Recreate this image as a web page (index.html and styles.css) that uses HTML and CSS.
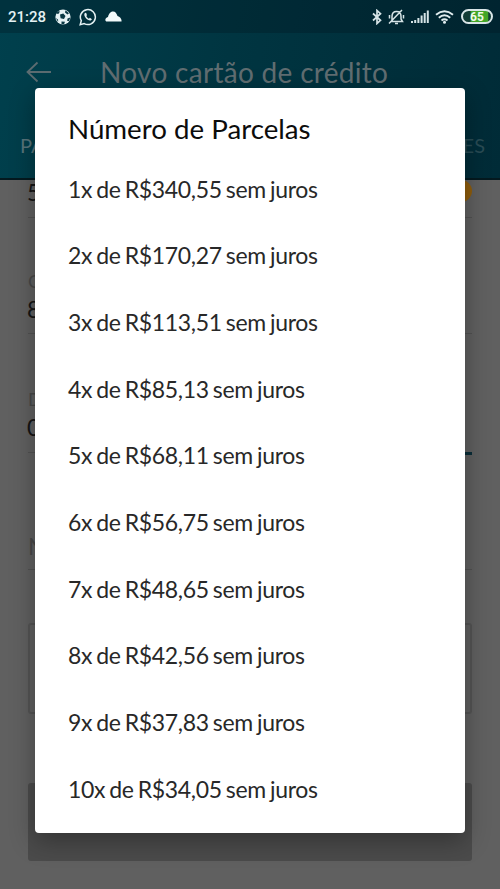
FILE: index.html
```html
<!DOCTYPE html>
<html lang="pt-BR">
<head>
<meta charset="utf-8">
<title>Novo cartão de crédito</title>
<link rel="stylesheet" href="styles.css">
</head>
<body>
<div class="screen">
  <header class="header">
    <div class="status">
      <span class="clock">21:28</span>
      <svg class="ball" width="16" height="16" viewBox="0 0 16 16"><circle cx="8" cy="8" r="7.6" fill="#e4f1f3"/><path d="M5 5.5 8.300 4.500 10.500 7 9 10 5.600 9.300ZM1 4.500 3 2.300 5 2.500 3.300 5ZM10.500 1.200 14 4.200 12.500 5.500 10 3.500ZM.8 9 3 10.500 3.200 13ZM6.500 12.500 10 12.800 9 15.200 6.500 15ZM12.500 9.500 15.300 8.500 14 12 12.200 12Z" fill="#083743"/></svg>
      <svg class="whats" width="18" height="18" viewBox="0 0 18 18"><path d="M1.200 16.700 2.300 12.700A7.500 7.500 0 1 1 5.200 15.600Z" fill="none" stroke="#e4f1f3" stroke-width="1.500"/><path d="M6.400 4.800 5.500 5.600C4.300 8.300 8.500 13 11.700 12.500L13 11.200 10.900 9.800 9.900 10.700C8.700 10.200 7.700 9.200 7.300 8.100L8 7.200 7.200 5Z" fill="#e4f1f3"/></svg>
      <svg class="cloud" width="17" height="11" viewBox="0 0 17 11"><path d="M2 10.500C-.5 10.500-.2 7 3 6 4 2 6 .5 8 .5 10.500.5 11.500 2.500 12.500 5 15 5.500 17 8.500 16.500 10.500Z" fill="#f2fafa"/></svg>
      <svg class="bluetooth" width="10" height="16" viewBox="0 0 10 16"><path d="M1 4.500 8.500 11.300 5 14.500V1.500L8.500 4.700 1 11.500" fill="none" stroke="#d5e3e6" stroke-width="1.700"/></svg>
      <svg class="mute" width="17" height="16" viewBox="0 0 17 16"><path d="M4 12V7.500C4 3.800 6 2.500 8.500 2.500S13 4 13 7.500V10L14.500 12.500H3M7 14.500H10M1 14.500 14 1M1.500 6V9.500M15.500 6V9.500" fill="none" stroke="#d5e3e6" stroke-width="1.500"/></svg>
      <svg class="signal" width="18" height="14" viewBox="0 0 18 14"><path d="M0 11H2V13H0ZM3.200 10H5.200V13H3.200ZM6.400 8H8.400V13H6.400ZM9.600 5.500H11.600V13H9.600ZM12.700 3H14.700V13H12.700ZM15.800.5H17.800V13H15.800Z" fill="#d5e3e6"/></svg>
      <svg class="wifi" width="19" height="14" viewBox="0 0 19 14"><path d="M1 4.700Q9.500-2.200 18 4.700M3.800 7.700Q9.500 2.800 15.200 7.700M6.500 10.400Q9.500 8 12.500 10.400" fill="none" stroke="#e0edef" stroke-width="1.900"/><circle cx="9.500" cy="12.300" r="1.500" fill="#e0edef"/></svg>
      <span class="battery">65</span>
    </div>
    <div class="bar">
      <svg width="26" height="22" viewBox="0 0 26 22"><path d="M25 11H1.500M11.500 1.500 1.500 11 11.500 20.500" fill="none" stroke="#5c6c71" stroke-width="1.800"/></svg>
      <h1 class="heading">Novo cartão de crédito</h1>
    </div>
    <nav class="tabs"><span>PA</span><span class="tab-off">ES</span></nav>
  </header>
  <main class="form">
    <div class="field first"><div class="value">5</div><i class="badge"></i></div>
    <div class="field second"><div class="label">C</div><div class="value">8</div></div>
    <div class="field third"><div class="label">D</div><div class="value">0</div><i class="focus"></i></div>
    <div class="field fourth"><div class="hint">N</div></div>
    <div class="box"></div>
    <div class="button"></div>
  </main>
  <section class="dialog" role="dialog">
    <h2 class="title">Número de Parcelas</h2>
    <ul class="options">
      <li><span class="option">1x de R$340,55 sem juros</span></li>
      <li><span class="option">2x de R$170,27 sem juros</span></li>
      <li><span class="option">3x de R$113,51 sem juros</span></li>
      <li><span class="option">4x de R$85,13 sem juros</span></li>
      <li><span class="option">5x de R$68,11 sem juros</span></li>
      <li><span class="option">6x de R$56,75 sem juros</span></li>
      <li><span class="option">7x de R$48,65 sem juros</span></li>
      <li><span class="option">8x de R$42,56 sem juros</span></li>
      <li><span class="option">9x de R$37,83 sem juros</span></li>
      <li><span class="option">10x de R$34,05 sem juros</span></li>
    </ul>
  </section>
</div>
</body>
</html>
```
FILE: styles.css
```css
* { box-sizing: border-box; }
body { margin: 0; font-family: Lato, sans-serif; }
.screen { position: relative; width: 500px; height: 889px; overflow: hidden; background: #606060; }
.header { height: 180px; background: linear-gradient(100deg, #00404d, #003541 45%, #002b37); border-bottom: 2px solid #04191f; }
.status { display: flex; align-items: center; height: 33px; padding: 0 8px; background: rgba(0, 20, 30, .3); }
.status svg { flex: none; }
.clock { width: 38px; padding-top: 1px; color: #e4f1f3; font: 500 15px/1 Roboto, sans-serif; white-space: nowrap; }
.ball { margin-left: 9px; }
.whats { margin-left: 8px; }
.cloud { margin-left: 8px; }
.bluetooth { margin-left: auto; }
.mute { margin-left: 6px; }
.signal { margin-left: 6px; }
.wifi { margin-left: 6px; }
.battery { flex: none; width: 32px; height: 15px; margin: 0 -1px 0 7px; border: 2px solid #d9e5e7; border-radius: 8px; background: linear-gradient(90deg, #123c36 25%, #43a628 30%, #43a628 88%, #123c36 92%); color: #f0fae9; font: 700 12px/12px Roboto, sans-serif; text-align: center; }
.bar { display: flex; align-items: center; height: 78px; padding-left: 26px; }
.heading { margin: 0 0 0 48px; color: #606d71; font: 400 28px/34px Lato, sans-serif; letter-spacing: .3px; white-space: nowrap; }
.tabs { display: flex; justify-content: space-between; padding: 22px 15px 0 20px; color: #58747b; font-size: 20px; line-height: 24px; }
.tab-off { color: #294b54; }
.form { padding: 0 28px; color: #151515; font-size: 23px; line-height: 28px; }
.form .value { margin-left: -1px; }
.field { position: relative; border-bottom: 1px solid #525252; }
.first { height: 38px; }
.first .value { line-height: 24px; }
.badge { position: absolute; right: 0; top: 0; width: 22px; height: 22px; border-radius: 50%; background: #8f5d0c; }
.second { height: 116px; padding-top: 49px; }
.third { height: 119px; padding-top: 51px; }
.label { color: #484848; font-size: 18px; line-height: 28px; }
.focus { position: absolute; right: 0; bottom: -3px; width: 40px; height: 3px; background: #092d38; }
.fourth { height: 117px; padding-top: 79px; }
.hint { color: #484848; }
.box { height: 91px; margin-top: 53px; border: 2px solid #545454; border-radius: 3px; }
.button { height: 78px; margin-top: 69px; border-radius: 3px; background: #4b4b4b; }
.dialog { position: absolute; left: 35px; top: 88px; width: 430px; height: 745px; padding: 24px 34px 0 33px; border-radius: 4px; background: #fff; box-shadow: 0 8px 26px rgba(0, 0, 0, .32); }
.title { margin: 0; color: #0c0c0c; font-size: 27.7px; font-weight: 400; line-height: 34px; white-space: nowrap; }
.options { margin: 9.500px 0 0; padding: 0; list-style: none; }
.options li { display: flex; align-items: center; height: 66.65px; color: #282828; font-size: 23px; letter-spacing: -.32px; word-spacing: -1.5px; line-height: 28px; white-space: nowrap; }
```
